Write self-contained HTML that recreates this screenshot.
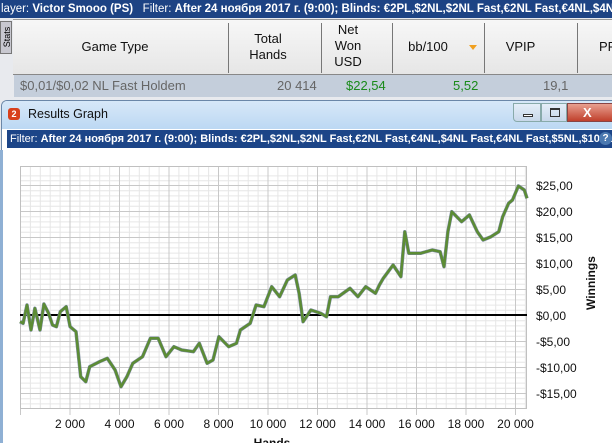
<!DOCTYPE html>
<html><head><meta charset="utf-8"><style>
*{margin:0;padding:0;box-sizing:border-box}
html,body{width:612px;height:443px;overflow:hidden}
body{background:#e8eaee;font-family:"Liberation Sans",sans-serif;position:relative}
.abs{position:absolute}
#top{left:0;top:0;width:612px;height:18px;background:#1d4384;color:#fff;font-size:11.5px;line-height:18px;white-space:nowrap;overflow:hidden;padding-left:1px}
#hdr{left:13px;top:19px;width:599px;height:56px;background:linear-gradient(#f7f7f7,#e6e6e6);border-top:1px solid #999;border-bottom:1px solid #888}
.sep{top:23px;width:1px;height:50px;background:#777}
.h{font-size:13px;color:#111;text-align:center;line-height:16px}
#row{left:14px;top:75px;width:598px;height:22px;background:#c4cedb;font-size:13px;line-height:22px;color:#666}
#stats{left:0;top:21px;width:12px;height:33px;background:#c8c8d0;border:1px solid #777}
#win{left:1px;top:100px;width:611px;height:343px;background:#fff;border:1px solid #6b87a8;border-right:none;border-bottom:none;border-radius:6px 0 0 0}
#title{left:2px;top:101px;width:610px;height:28px;background:linear-gradient(#d7e8f8,#bcd8f3);border-radius:5px 0 0 0}
#filter{left:7px;top:130px;width:605px;height:18px;background:#1c4588;color:#fff;font-size:11px;line-height:18px;white-space:nowrap;overflow:hidden;padding-left:3px}
</style></head><body>
<div id="top" class="abs">layer: <b>Victor Smooo (PS)</b>&nbsp;&nbsp;&nbsp;Filter: <b>After 24 ноября 2017 г. (9:00); Blinds: €2PL,$2NL,$2NL Fast,€2NL Fast,€4NL,$4NL Fast,€4NL Fast</b></div>
<div id="hdr" class="abs"></div>
<div id="stats" class="abs"><div style="transform:rotate(-90deg);font-size:9px;position:absolute;left:-9px;top:10px;width:30px;text-align:center">Stats</div></div>
<div class="abs sep" style="left:228px"></div>
<div class="abs sep" style="left:321px"></div>
<div class="abs sep" style="left:392px"></div>
<div class="abs sep" style="left:484px"></div>
<div class="abs sep" style="left:577px"></div>
<div class="abs h" style="left:55px;top:39px;width:120px">Game Type</div>
<div class="abs h" style="left:240px;top:31px;width:56px">Total<br>Hands</div>
<div class="abs h" style="left:326px;top:22px;width:44px">Net<br>Won<br>USD</div>
<div class="abs h" style="left:403px;top:39px;width:50px">bb/100</div>
<div class="abs" style="left:469px;top:45px;width:0;height:0;border-left:4px solid transparent;border-right:4px solid transparent;border-top:5px solid #f0a020"></div>
<div class="abs h" style="left:498px;top:39px;width:45px">VPIP</div>
<div class="abs h" style="left:599px;top:39px;width:20px;text-align:left">PF</div>
<div id="row" class="abs">
<span class="abs" style="left:6px">$0,01/$0,02 NL Fast Holdem</span>
<span class="abs" style="left:263px">20 414</span>
<span class="abs" style="left:332px;color:#1a8a1a">$22,54</span>
<span class="abs" style="left:439px;color:#1a8a1a">5,52</span>
<span class="abs" style="left:529px">19,1</span>
</div>
<div id="win" class="abs"></div>
<div id="title" class="abs"></div>
<div class="abs" style="left:8px;top:108px;width:12px;height:12px;background:#d8401c;border-radius:3px;color:#fff;font-size:9px;font-weight:bold;text-align:center;line-height:12px">2</div>
<div class="abs" style="left:28px;top:107px;font-size:12.5px;color:#111">Results Graph</div>
<div class="abs" style="left:513px;top:103px;width:28px;height:19px;border:1px solid #8aa;border-radius:0 0 0 4px;background:linear-gradient(#e4eef8,#c8d8ea)"><div class="abs" style="left:9px;top:10px;width:10px;height:3px;border:1px solid #333;background:#fff"></div></div>
<div class="abs" style="left:541px;top:103px;width:26px;height:19px;border:1px solid #8aa;background:linear-gradient(#e4eef8,#c8d8ea)"><div class="abs" style="left:8px;top:4px;width:10px;height:9px;border:1px solid #333;border-top-width:2px"></div></div>
<div class="abs" style="left:567px;top:103px;width:45px;height:19px;border:1px solid #844;border-right:none;background:linear-gradient(#e8a090,#c0402c);color:#fff;font-weight:bold;font-size:13px;line-height:17px;padding-left:15px">X</div>
<div id="filter" class="abs">Filter: <b>After 24 ноября 2017 г. (9:00); Blinds: €2PL,$2NL,$2NL Fast,€2NL Fast,€4NL,$4NL Fast,€4NL Fast,$5NL,$10NL,€10</b></div>
<div class="abs" style="left:599px;top:132px;width:13px;height:13px;border-radius:50%;background:#4a78b0;color:#fff;font-size:10px;font-weight:bold;text-align:center;line-height:13px">?</div>
<div class="abs" style="left:0;top:150px;width:3px;height:293px;background:#8fb0d4"></div>
<svg class="abs" style="left:0;top:0" width="612" height="443" font-family="Liberation Sans, sans-serif">
<path stroke="#e6e6e6" stroke-width="1" fill="none" d="M30.4 167V408 M40.3 167V408 M50.2 167V408 M60.1 167V408 M79.9 167V408 M89.8 167V408 M99.7 167V408 M109.6 167V408 M129.4 167V408 M139.3 167V408 M149.2 167V408 M159.1 167V408 M178.9 167V408 M188.8 167V408 M198.7 167V408 M208.6 167V408 M228.4 167V408 M238.3 167V408 M248.2 167V408 M258.1 167V408 M277.9 167V408 M287.8 167V408 M297.7 167V408 M307.6 167V408 M327.4 167V408 M337.3 167V408 M347.2 167V408 M357.1 167V408 M376.9 167V408 M386.8 167V408 M396.7 167V408 M406.6 167V408 M426.4 167V408 M436.3 167V408 M446.2 167V408 M456.1 167V408 M475.9 167V408 M485.8 167V408 M495.7 167V408 M505.6 167V408 M525.4 167V408
M20 175.9H527 M20 180.7H527 M20 190.7H527 M20 195.9H527 M20 201.1H527 M20 206.3H527 M20 216.7H527 M20 221.9H527 M20 227.1H527 M20 232.3H527 M20 242.7H527 M20 247.9H527 M20 253.1H527 M20 258.3H527 M20 268.7H527 M20 273.9H527 M20 279.1H527 M20 284.3H527 M20 294.7H527 M20 299.9H527 M20 305.1H527 M20 310.3H527 M20 320.7H527 M20 325.9H527 M20 331.1H527 M20 336.3H527 M20 346.7H527 M20 351.9H527 M20 357.1H527 M20 362.3H527 M20 372.7H527 M20 377.9H527 M20 383.1H527 M20 388.3H527 M20 398.7H527 M20 403.9H527"/>
<g stroke="#c8c8c8" stroke-width="1">
<path d="M20.5 166V415 M70 166V415 M119.5 166V415 M169 166V415 M218.5 166V415 M268 166V415 M317.5 166V415 M367 166V415 M416.5 166V415 M466 166V415 M515.5 166V415"/>
<path d="M20 185.5H527 M20 211.5H527 M20 237.5H527 M20 263.5H527 M20 289.5H527 M20 341.5H527 M20 367.5H527 M20 393.5H527"/>
</g>
<rect x="20.5" y="166.5" width="506" height="242" fill="none" stroke="#c0c0c0"/>
<line x1="20" y1="315" x2="527" y2="315" stroke="#000" stroke-width="2"/>
<polyline fill="none" stroke="#7a8aa0" stroke-width="3.5" stroke-linejoin="round" points="20,321.7 23.1,323.3 27,305 31,330 34.9,308.3 40,330 43.9,304 48.6,313.3 52.5,325 56.4,326.7 60.3,311.7 66.2,306.7 70.1,326.7 76,331.7 80.7,376.7 85.8,381.7 89.7,366.7 99.5,361.7 107.3,358.3 115.1,370 121,386.7 126.9,376.7 132.8,363.3 142.5,356.7 150.4,338.3 158.2,338.3 166,356.7 173.9,346.7 181.7,350 193.4,351.7 199.3,343.3 207.1,363.3 213,360 218.9,336.7 228.7,346.7 236.5,343.3 240.4,330 250.2,323.3 256.1,305 263.9,306.7 271.7,286.7 279.6,296.7 287.4,280 295.2,275 299.1,293.3 303.1,321.7 310.9,310 320.7,313.3 326.5,316.7 330.5,296.7 338.3,296.7 350,288.3 357.9,296.7 365.7,286.7 375.5,293.3 379.4,285 383.3,278.3 393.1,265 400.9,276.7 404.8,231.7 408.8,253.3 420.5,253.3 432.2,250 440.1,251.7 444,266.7 447.9,231.7 451.8,211.7 461.6,221.7 469.4,215 477.3,231.7 483.1,240 491,236.7 498.8,231.7 502.7,216.7 508.6,203.3 512.5,200 518.4,186 524.3,190 527,198.3"/>
<polyline fill="none" stroke="#5c8c34" stroke-width="2.5" stroke-linejoin="round" points="20,321.7 23.1,323.3 27,305 31,330 34.9,308.3 40,330 43.9,304 48.6,313.3 52.5,325 56.4,326.7 60.3,311.7 66.2,306.7 70.1,326.7 76,331.7 80.7,376.7 85.8,381.7 89.7,366.7 99.5,361.7 107.3,358.3 115.1,370 121,386.7 126.9,376.7 132.8,363.3 142.5,356.7 150.4,338.3 158.2,338.3 166,356.7 173.9,346.7 181.7,350 193.4,351.7 199.3,343.3 207.1,363.3 213,360 218.9,336.7 228.7,346.7 236.5,343.3 240.4,330 250.2,323.3 256.1,305 263.9,306.7 271.7,286.7 279.6,296.7 287.4,280 295.2,275 299.1,293.3 303.1,321.7 310.9,310 320.7,313.3 326.5,316.7 330.5,296.7 338.3,296.7 350,288.3 357.9,296.7 365.7,286.7 375.5,293.3 379.4,285 383.3,278.3 393.1,265 400.9,276.7 404.8,231.7 408.8,253.3 420.5,253.3 432.2,250 440.1,251.7 444,266.7 447.9,231.7 451.8,211.7 461.6,221.7 469.4,215 477.3,231.7 483.1,240 491,236.7 498.8,231.7 502.7,216.7 508.6,203.3 512.5,200 518.4,186 524.3,190 527,198.3"/>
<g font-size="12" fill="#111">
<text x="536" y="190">$25,00</text><text x="536" y="216">$20,00</text><text x="536" y="242">$15,00</text><text x="536" y="268">$10,00</text><text x="536" y="294">$5,00</text><text x="536" y="320">$0,00</text><text x="536" y="346">-$5,00</text><text x="536" y="372">-$10,00</text><text x="536" y="398">-$15,00</text>
</g>
<text transform="translate(595,310) rotate(-90)" font-size="12" font-weight="bold" fill="#111">Winnings</text>
<g font-size="12" fill="#111" text-anchor="middle">
<text x="70" y="428">2 000</text><text x="119.5" y="428">4 000</text><text x="169" y="428">6 000</text><text x="218.5" y="428">8 000</text><text x="268" y="428">10 000</text><text x="317.5" y="428">12 000</text><text x="367" y="428">14 000</text><text x="416.5" y="428">16 000</text><text x="466" y="428">18 000</text><text x="515.5" y="428">20 000</text>
<text x="272" y="447" font-weight="bold">Hands</text>
</g>
</svg>
</body></html>
